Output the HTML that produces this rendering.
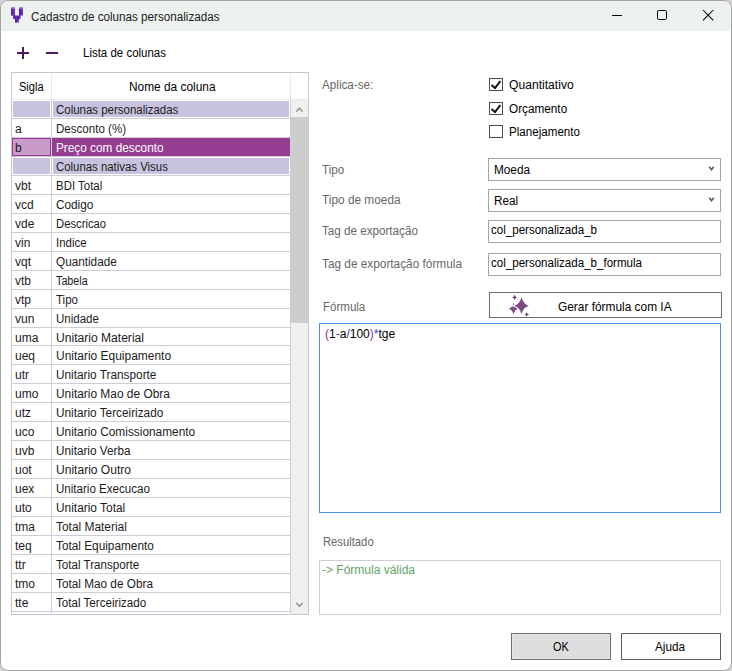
<!DOCTYPE html>
<html><head><meta charset="utf-8"><style>
html,body{margin:0;padding:0;}
body{width:732px;height:671px;background:#d2d2d6;position:relative;overflow:hidden;font-family:"Liberation Sans",sans-serif;}
#win{position:absolute;left:0;top:0;width:732px;height:671px;box-sizing:border-box;border:1px solid #a6a6a6;border-radius:8px;background:#fff;overflow:hidden;}
.t{position:absolute;white-space:pre;line-height:16px;transform-origin:0 0;}
.b{position:absolute;}
#title{position:absolute;left:0;top:0;width:730px;height:30px;background:#edf2ef;}
</style></head><body>
<div id="win">
<div id="title"></div>
</div>
<div id="c" style="position:absolute;left:0;top:0;width:732px;height:671px;">
<div class="b" style="left:11px;top:72px;width:298px;height:543px;border:1px solid #c9c4d1;box-sizing:border-box;background:#fff"></div><div class="b" style="left:51px;top:73px;width:1px;height:26px;background:#e9e9e9"></div><div class="b" style="left:290px;top:73px;width:1px;height:26px;background:#e9e9e9"></div><div class="b" style="left:12px;top:99px;width:296px;height:1px;background:#ebebeb"></div><div class="t" style="left:19px;top:79px;color:#000;font-size:12px;transform:scaleX(0.92);">Sigla</div><div class="t" style="left:129px;top:79px;color:#000;font-size:12px;transform:scaleX(0.99);">Nome da coluna</div><div class="b" style="left:13px;top:101px;width:37px;height:16px;background:#c8c2de"></div><div class="b" style="left:53px;top:101px;width:236px;height:16px;background:#c8c2de"></div><div class="t" style="left:55.5px;top:102px;color:#1c1c1c;font-size:12px;transform:scaleX(0.955);">Colunas personalizadas</div><div class="b" style="left:12px;top:118px;width:279px;height:1px;background:#d0cbd8"></div><div class="t" style="left:15px;top:121px;color:#1c1c1c;font-size:12px;transform:scaleX(1.0);">a</div><div class="t" style="left:55.5px;top:121px;color:#1c1c1c;font-size:12px;transform:scaleX(0.964);">Desconto (%)</div><div class="b" style="left:12px;top:137px;width:279px;height:1px;background:#d0cbd8"></div><div class="b" style="left:12px;top:138px;width:39px;height:18px;background:#c99bc9;border:1px solid #9a3b96;box-sizing:border-box"></div><div class="b" style="left:52px;top:138px;width:238px;height:18px;background:#953d91"></div><div class="t" style="left:15px;top:140px;color:#1c1c1c;font-size:12px;transform:scaleX(1.0);">b</div><div class="t" style="left:55.5px;top:140px;color:#fff;font-size:12px;transform:scaleX(0.983);">Preço com desconto</div><div class="b" style="left:12px;top:156px;width:279px;height:1px;background:#d0cbd8"></div><div class="b" style="left:13px;top:158px;width:37px;height:16px;background:#c8c2de"></div><div class="b" style="left:53px;top:158px;width:236px;height:16px;background:#c8c2de"></div><div class="t" style="left:55.5px;top:159px;color:#1c1c1c;font-size:12px;transform:scaleX(0.949);">Colunas nativas Visus</div><div class="b" style="left:12px;top:175px;width:279px;height:1px;background:#d0cbd8"></div><div class="t" style="left:15px;top:178px;color:#1c1c1c;font-size:12px;transform:scaleX(1.0);">vbt</div><div class="t" style="left:55.5px;top:178px;color:#1c1c1c;font-size:12px;transform:scaleX(0.954);">BDI Total</div><div class="b" style="left:12px;top:194px;width:279px;height:1px;background:#d0cbd8"></div><div class="t" style="left:15px;top:197px;color:#1c1c1c;font-size:12px;transform:scaleX(1.0);">vcd</div><div class="t" style="left:55.5px;top:197px;color:#1c1c1c;font-size:12px;transform:scaleX(0.982);">Codigo</div><div class="b" style="left:12px;top:213px;width:279px;height:1px;background:#d0cbd8"></div><div class="t" style="left:15px;top:216px;color:#1c1c1c;font-size:12px;transform:scaleX(1.0);">vde</div><div class="t" style="left:55.5px;top:216px;color:#1c1c1c;font-size:12px;transform:scaleX(0.938);">Descricao</div><div class="b" style="left:12px;top:232px;width:279px;height:1px;background:#d0cbd8"></div><div class="t" style="left:15px;top:235px;color:#1c1c1c;font-size:12px;transform:scaleX(1.0);">vin</div><div class="t" style="left:55.5px;top:235px;color:#1c1c1c;font-size:12px;transform:scaleX(0.953);">Indice</div><div class="b" style="left:12px;top:251px;width:279px;height:1px;background:#d0cbd8"></div><div class="t" style="left:15px;top:254px;color:#1c1c1c;font-size:12px;transform:scaleX(1.0);">vqt</div><div class="t" style="left:55.5px;top:254px;color:#1c1c1c;font-size:12px;transform:scaleX(0.979);">Quantidade</div><div class="b" style="left:12px;top:270px;width:279px;height:1px;background:#d0cbd8"></div><div class="t" style="left:15px;top:273px;color:#1c1c1c;font-size:12px;transform:scaleX(1.0);">vtb</div><div class="t" style="left:55.5px;top:273px;color:#1c1c1c;font-size:12px;transform:scaleX(0.897);">Tabela</div><div class="b" style="left:12px;top:289px;width:279px;height:1px;background:#d0cbd8"></div><div class="t" style="left:15px;top:292px;color:#1c1c1c;font-size:12px;transform:scaleX(1.0);">vtp</div><div class="t" style="left:55.5px;top:292px;color:#1c1c1c;font-size:12px;transform:scaleX(0.957);">Tipo</div><div class="b" style="left:12px;top:308px;width:279px;height:1px;background:#d0cbd8"></div><div class="t" style="left:15px;top:311px;color:#1c1c1c;font-size:12px;transform:scaleX(1.0);">vun</div><div class="t" style="left:55.5px;top:311px;color:#1c1c1c;font-size:12px;transform:scaleX(0.96);">Unidade</div><div class="b" style="left:12px;top:327px;width:279px;height:1px;background:#d0cbd8"></div><div class="t" style="left:15px;top:330px;color:#1c1c1c;font-size:12px;transform:scaleX(1.0);">uma</div><div class="t" style="left:55.5px;top:330px;color:#1c1c1c;font-size:12px;transform:scaleX(1.007);">Unitario Material</div><div class="b" style="left:12px;top:345px;width:279px;height:1px;background:#d0cbd8"></div><div class="t" style="left:15px;top:348px;color:#1c1c1c;font-size:12px;transform:scaleX(1.0);">ueq</div><div class="t" style="left:55.5px;top:348px;color:#1c1c1c;font-size:12px;transform:scaleX(0.997);">Unitario Equipamento</div><div class="b" style="left:12px;top:364px;width:279px;height:1px;background:#d0cbd8"></div><div class="t" style="left:15px;top:367px;color:#1c1c1c;font-size:12px;transform:scaleX(1.0);">utr</div><div class="t" style="left:55.5px;top:367px;color:#1c1c1c;font-size:12px;transform:scaleX(0.984);">Unitario Transporte</div><div class="b" style="left:12px;top:383px;width:279px;height:1px;background:#d0cbd8"></div><div class="t" style="left:15px;top:386px;color:#1c1c1c;font-size:12px;transform:scaleX(1.0);">umo</div><div class="t" style="left:55.5px;top:386px;color:#1c1c1c;font-size:12px;transform:scaleX(0.993);">Unitario Mao de Obra</div><div class="b" style="left:12px;top:402px;width:279px;height:1px;background:#d0cbd8"></div><div class="t" style="left:15px;top:405px;color:#1c1c1c;font-size:12px;transform:scaleX(1.0);">utz</div><div class="t" style="left:55.5px;top:405px;color:#1c1c1c;font-size:12px;transform:scaleX(0.983);">Unitario Terceirizado</div><div class="b" style="left:12px;top:421px;width:279px;height:1px;background:#d0cbd8"></div><div class="t" style="left:15px;top:424px;color:#1c1c1c;font-size:12px;transform:scaleX(1.0);">uco</div><div class="t" style="left:55.5px;top:424px;color:#1c1c1c;font-size:12px;transform:scaleX(0.989);">Unitario Comissionamento</div><div class="b" style="left:12px;top:440px;width:279px;height:1px;background:#d0cbd8"></div><div class="t" style="left:15px;top:443px;color:#1c1c1c;font-size:12px;transform:scaleX(1.0);">uvb</div><div class="t" style="left:55.5px;top:443px;color:#1c1c1c;font-size:12px;transform:scaleX(0.979);">Unitario Verba</div><div class="b" style="left:12px;top:459px;width:279px;height:1px;background:#d0cbd8"></div><div class="t" style="left:15px;top:462px;color:#1c1c1c;font-size:12px;transform:scaleX(1.0);">uot</div><div class="t" style="left:55.5px;top:462px;color:#1c1c1c;font-size:12px;transform:scaleX(1.004);">Unitario Outro</div><div class="b" style="left:12px;top:478px;width:279px;height:1px;background:#d0cbd8"></div><div class="t" style="left:15px;top:481px;color:#1c1c1c;font-size:12px;transform:scaleX(1.0);">uex</div><div class="t" style="left:55.5px;top:481px;color:#1c1c1c;font-size:12px;transform:scaleX(0.964);">Unitario Execucao</div><div class="b" style="left:12px;top:497px;width:279px;height:1px;background:#d0cbd8"></div><div class="t" style="left:15px;top:500px;color:#1c1c1c;font-size:12px;transform:scaleX(1.0);">uto</div><div class="t" style="left:55.5px;top:500px;color:#1c1c1c;font-size:12px;transform:scaleX(0.991);">Unitario Total</div><div class="b" style="left:12px;top:516px;width:279px;height:1px;background:#d0cbd8"></div><div class="t" style="left:15px;top:519px;color:#1c1c1c;font-size:12px;transform:scaleX(1.0);">tma</div><div class="t" style="left:55.5px;top:519px;color:#1c1c1c;font-size:12px;transform:scaleX(0.993);">Total Material</div><div class="b" style="left:12px;top:535px;width:279px;height:1px;background:#d0cbd8"></div><div class="t" style="left:15px;top:538px;color:#1c1c1c;font-size:12px;transform:scaleX(1.0);">teq</div><div class="t" style="left:55.5px;top:538px;color:#1c1c1c;font-size:12px;transform:scaleX(0.984);">Total Equipamento</div><div class="b" style="left:12px;top:554px;width:279px;height:1px;background:#d0cbd8"></div><div class="t" style="left:15px;top:557px;color:#1c1c1c;font-size:12px;transform:scaleX(1.0);">ttr</div><div class="t" style="left:55.5px;top:557px;color:#1c1c1c;font-size:12px;transform:scaleX(0.967);">Total Transporte</div><div class="b" style="left:12px;top:573px;width:279px;height:1px;background:#d0cbd8"></div><div class="t" style="left:15px;top:576px;color:#1c1c1c;font-size:12px;transform:scaleX(1.0);">tmo</div><div class="t" style="left:55.5px;top:576px;color:#1c1c1c;font-size:12px;transform:scaleX(0.982);">Total Mao de Obra</div><div class="b" style="left:12px;top:592px;width:279px;height:1px;background:#d0cbd8"></div><div class="t" style="left:15px;top:595px;color:#1c1c1c;font-size:12px;transform:scaleX(1.0);">tte</div><div class="t" style="left:55.5px;top:595px;color:#1c1c1c;font-size:12px;transform:scaleX(0.968);">Total Terceirizado</div><div class="b" style="left:12px;top:611px;width:279px;height:1px;background:#d0cbd8"></div><div class="b" style="left:51px;top:100px;width:1px;height:513px;background:#d0cbd8"></div><div class="b" style="left:290px;top:100px;width:1px;height:513px;background:#d0cbd8"></div><div class="b" style="left:291px;top:100px;width:17px;height:514px;background:#f0f0f0"></div><div class="b" style="left:291px;top:117px;width:17px;height:206px;background:#cdcdcd"></div><svg class="b" style="left:291px;top:100px" width="17" height="17"><path d="M5.3 11.6 L8.5 8.2 L11.7 11.6" fill="none" stroke="#868686" stroke-width="1.3"/></svg><svg class="b" style="left:291px;top:596px" width="17" height="17"><path d="M5.3 6.9 L8.5 10.3 L11.7 6.9" fill="none" stroke="#868686" stroke-width="1.3"/></svg><svg class="b" style="left:0;top:0" width="40" height="31" viewBox="0 0 40 31"><path d="M11 8.3 Q11 7.6 12.2 7.6 L13.8 7.6 Q15 7.6 15 8.3 L15 15.4 L19 15.4 L19 8.3 Q19 7.6 20.2 7.6 L21.8 7.6 Q23 7.6 23 8.3 L23 15.4 L20.6 15.4 L20.6 19 L19 19 L18.9 22.6 L15.1 22.6 L15 19 L13.3 19 L13.3 15.4 L11 15.4 Z" fill="#6b30c0"/><path d="M11 7.6 L15 7.6 L15 9 L11 9 Z M19 7.6 L23 7.6 L23 9 L19 9 Z" fill="#9a6ade" opacity="0.8"/><path d="M11 9 L12.8 9 L12.8 15.4 L11 15.4 Z M19 9 L20.6 9 L20.6 15.4 L19 15.4 Z M13.3 15.4 L15.5 15.4 L15.5 19 L13.3 19 Z M15.1 19 L16.8 19 L16.8 22.6 L15.1 22.6 Z M16.8 16 L19 16 L19 19 L16.8 19 Z" fill="#4a128e" opacity="0.6"/></svg><div class="t" style="left:31px;top:9px;color:#1b1b1b;font-size:12px;transform:scaleX(0.971);">Cadastro de colunas personalizadas</div><svg class="b" style="left:600px;top:0" width="132" height="31"><line x1="12" y1="15.5" x2="22" y2="15.5" stroke="#000" stroke-width="1"/><rect x="57.5" y="10.5" width="9" height="9" rx="1.2" fill="none" stroke="#000" stroke-width="1"/><path d="M103 10 L113.3 20.3 M113.3 10 L103 20.3" stroke="#000" stroke-width="1.05"/></svg><div class="b" style="left:17px;top:51.6px;width:12.2px;height:2.7px;background:#4e1a5e"></div><div class="b" style="left:21.7px;top:47px;width:2.8px;height:12px;background:#4e1a5e"></div><div class="b" style="left:46px;top:51.6px;width:12.2px;height:2.7px;background:#4e1a5e"></div><div class="t" style="left:83px;top:45px;color:#000;font-size:12px;transform:scaleX(0.957);">Lista de colunas</div><div class="t" style="left:322px;top:77px;color:#676767;font-size:12px;transform:scaleX(0.974);">Aplica-se:</div><div class="t" style="left:322px;top:162px;color:#676767;font-size:12px;transform:scaleX(0.965);">Tipo</div><div class="t" style="left:322px;top:192px;color:#676767;font-size:12px;transform:scaleX(0.987);">Tipo de moeda</div><div class="t" style="left:322px;top:223px;color:#676767;font-size:12px;transform:scaleX(0.971);">Tag de exportação</div><div class="t" style="left:322px;top:256px;color:#676767;font-size:12px;transform:scaleX(0.985);">Tag de exportação fórmula</div><div class="t" style="left:323px;top:299px;color:#676767;font-size:12px;transform:scaleX(0.96);">Fórmula</div><div class="t" style="left:323px;top:534px;color:#676767;font-size:12px;transform:scaleX(0.937);">Resultado</div><div class="b" style="left:489px;top:78px;width:14px;height:13px;border:1px solid #4a4a4a;box-sizing:border-box;background:#fff"></div><svg class="b" style="left:489px;top:78px" width="14" height="13"><path d="M2.5 6.9 L6.1 10.1 L11.4 3" fill="none" stroke="#111" stroke-width="2"/></svg><div class="t" style="left:509px;top:77px;color:#000;font-size:12px;transform:scaleX(1.01);">Quantitativo</div><div class="b" style="left:489px;top:102px;width:14px;height:13px;border:1px solid #4a4a4a;box-sizing:border-box;background:#fff"></div><svg class="b" style="left:489px;top:102px" width="14" height="13"><path d="M2.5 6.9 L6.1 10.1 L11.4 3" fill="none" stroke="#111" stroke-width="2"/></svg><div class="t" style="left:509px;top:101px;color:#000;font-size:12px;transform:scaleX(0.98);">Orçamento</div><div class="b" style="left:489px;top:125px;width:14px;height:13px;border:1px solid #4a4a4a;box-sizing:border-box;background:#fff"></div><div class="t" style="left:509px;top:124px;color:#000;font-size:12px;transform:scaleX(0.967);">Planejamento</div><div class="b" style="left:488px;top:158px;width:233px;height:23px;border:1px solid #a3a3a3;box-sizing:border-box;background:#fff"></div><svg class="b" style="left:700px;top:158px" width="20" height="23"><path d="M9.3 8.8 L11.5 11.7 L13.7 8.8" fill="none" stroke="#555" stroke-width="1.5"/></svg><div class="t" style="left:494px;top:162px;color:#000;font-size:12px;transform:scaleX(0.98);">Moeda</div><div class="b" style="left:488px;top:189px;width:233px;height:23px;border:1px solid #a3a3a3;box-sizing:border-box;background:#fff"></div><svg class="b" style="left:700px;top:189px" width="20" height="23"><path d="M9.3 8.8 L11.5 11.7 L13.7 8.8" fill="none" stroke="#555" stroke-width="1.5"/></svg><div class="t" style="left:494px;top:193px;color:#000;font-size:12px;transform:scaleX(0.98);">Real</div><div class="b" style="left:488px;top:220px;width:233px;height:23px;border:1px solid #a6a3ab;box-sizing:border-box;background:#fff"></div><div class="t" style="left:491px;top:222px;color:#000;font-size:12px;transform:scaleX(0.963);">col_personalizada_b</div><div class="b" style="left:488px;top:253px;width:233px;height:23px;border:1px solid #a6a3ab;box-sizing:border-box;background:#fff"></div><div class="t" style="left:491px;top:255px;color:#000;font-size:12px;transform:scaleX(0.963);">col_personalizada_b_formula</div><div class="b" style="left:489px;top:292px;width:233px;height:26px;border:1px solid #6f6f6f;box-sizing:border-box;background:#fff"></div><svg class="b" style="left:500px;top:292px" width="40" height="26"><path d="M14.6 2.6000000000000005 Q14.808 5.176 17.2 5.4 Q14.808 5.6240000000000006 14.6 8.2 Q14.392 5.6240000000000006 12.0 5.4 Q14.392 5.176 14.6 2.6000000000000005 Z" fill="#6b3a70" /><path d="M13.5 10.799999999999999 Q14.46 15.52 18.3 16.7 Q14.46 17.88 13.5 22.6 Q12.54 17.88 8.7 16.7 Q12.54 15.52 13.5 10.799999999999999 Z" fill="#83508a" /><path d="M21.5 5.1 Q22.94 11.979999999999999 28.7 13.7 Q22.94 15.42 21.5 22.299999999999997 Q20.06 15.42 14.3 13.7 Q20.06 11.979999999999999 21.5 5.1 Z" fill="#fff" stroke="#fff" stroke-width="2.2"/><path d="M21.5 5.1 Q22.94 11.979999999999999 28.7 13.7 Q22.94 15.42 21.5 22.299999999999997 Q20.06 15.42 14.3 13.7 Q20.06 11.979999999999999 21.5 5.1 Z" fill="#7c4b82" /><path d="M26.7 19.9 Q26.892 22.292 29.099999999999998 22.5 Q26.892 22.708 26.7 25.1 Q26.508 22.708 24.3 22.5 Q26.508 22.292 26.7 19.9 Z" fill="#6f3f74" /></svg><div class="t" style="left:558px;top:299px;color:#000;font-size:12px;transform:scaleX(0.99);">Gerar fórmula com IA</div><div class="b" style="left:319px;top:323px;width:402px;height:190px;border:1px solid #4a90e2;box-sizing:border-box;background:#fff"></div><div class="t" style="left:325px;top:326px;font-size:12px;transform:scaleX(1.0)"><span style="color:#8a2f9a">(</span>1<span style="color:#2a3ad0">-</span>a<span style="color:#2a3ad0">/</span>100<span style="color:#8a2f9a">)</span><span style="color:#2a3ad0">*</span>tge</div><div class="b" style="left:319px;top:560px;width:402px;height:55px;border:1px solid #cfcfd3;box-sizing:border-box;background:#fff"></div><div class="t" style="left:322px;top:562px;color:#62a466;font-size:12px;transform:scaleX(1.0);">-&gt; Fórmula válida</div><div class="b" style="left:511px;top:633px;width:100px;height:27px;border:1px solid #6c6c6c;box-sizing:border-box;background:#dddddd;box-shadow:inset 0 0 0 1px #e6e6e6"></div><div class="t" style="left:553px;top:639px;color:#000;font-size:12px;transform:scaleX(0.91);">OK</div><div class="b" style="left:621px;top:633px;width:100px;height:27px;border:1px solid #5f5f5f;box-sizing:border-box;background:#fff"></div><div class="t" style="left:655px;top:639px;color:#000;font-size:12px;transform:scaleX(0.98);">Ajuda</div>
</div>
</body></html>
